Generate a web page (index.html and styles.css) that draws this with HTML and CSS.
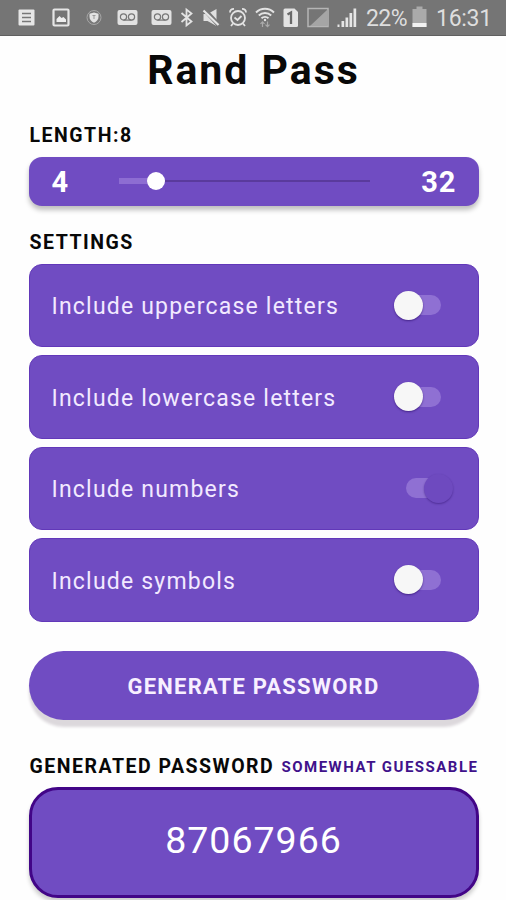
FILE: index.html
```html
<!DOCTYPE html>
<html lang="en">
<head>
<meta charset="utf-8">
<title>Rand Pass</title>
<link rel="stylesheet" href="styles.css">
</head>
<body>
<header class="status">
  <div class="notifications">
    <svg width="17" height="36" viewBox="0 0 17 36"><rect x=".5" y="9.500" width="16" height="16" rx="1" fill="#e6e6e6"/><path d="M4 13.500h9M4 17.500h9M4 21.500h9" stroke="#777" stroke-width="1.500"/></svg>
    <svg width="18" height="36" viewBox="0 0 18 36"><rect x="1.500" y="9.500" width="15" height="16" rx="1" fill="none" stroke="#e6e6e6" stroke-width="2.200"/><path d="M4.500 22v-3l3-3 2 2 2-1 2.500 2.500V22z" fill="#eee"/></svg>
    <svg width="16" height="36" viewBox="0 0 16 36"><circle cx="8" cy="17.500" r="7" fill="#777" stroke="#a7a7a7"/><path d="M8 12.500l4.500 1.300v3c0 2.700-1.800 4.700-4.500 6-2.700-1.300-4.500-3.300-4.500-6v-3z" fill="#e2e2e2"/><path d="M8 15v4M6.500 15.500h3" stroke="#999"/></svg>
    <svg width="21" height="36" viewBox="0 0 21 36"><rect x=".5" y="10" width="20" height="15" rx="2" fill="#e2e2e2"/><g fill="none" stroke="#777" stroke-width="1.200"><circle cx="6.500" cy="17" r="3.100"/><circle cx="14.500" cy="17" r="3.100"/><path d="M6.500 20.100h8"/></g></svg>
    <svg width="21" height="36" viewBox="0 0 21 36"><rect x=".5" y="10" width="20" height="15" rx="2" fill="#e2e2e2"/><g fill="none" stroke="#777" stroke-width="1.200"><circle cx="6.500" cy="17" r="3.100"/><circle cx="14.500" cy="17" r="3.100"/><path d="M6.500 20.100h8"/></g></svg>
  </div>
  <div class="system">
    <svg width="14" height="36" viewBox="0 0 14 36"><path d="M1.500 13l10 8.500-5 4V9.500l5 4-10 8.500" fill="none" stroke="#e3e3e3" stroke-width="1.800"/></svg>
    <svg width="19" height="36" viewBox="0 0 19 36"><path d="M1.500 14h4l9-5v17l-9-5h-4z" fill="#e0e0e0"/><path d="M2 9l15.500 17" stroke="#777" stroke-width="4.500"/><path d="M1.500 10.500L16.500 25" stroke="#e6e6e6" stroke-width="2.200"/></svg>
    <svg width="18" height="36" viewBox="0 0 18 36"><g fill="none" stroke="#e3e3e3" stroke-width="1.800"><circle cx="9" cy="18" r="7"/><path d="M1 12.500c0-2.300 1.600-3.700 4-3.700M17 12.500c0-2.300-1.600-3.700-4-3.700M4 23.500l-2 2.500M14 23.500l2 2.500M5.500 17.500l3 2.500 4-4"/></g></svg>
    <svg width="20" height="36" viewBox="0 0 20 36"><g fill="none" stroke="#e3e3e3" stroke-width="1.900"><path d="M1 12.500c5-5 13-5 18 0M3.800 15.500c3.500-3.400 8.900-3.400 12.400 0M6.500 18.300c2-1.900 5-1.900 7 0"/></g><circle cx="10" cy="20" r="1.200" fill="#e3e3e3"/><path d="M7.500 27v-5M5.500 23.800l2-2 2 2M12.500 21.500v5M10.500 24.700l2 2 2-2" fill="none" stroke="#aaa" stroke-width="1.200"/></svg>
    <svg width="16" height="36" viewBox="0 0 16 36"><path d="M2 8.500h9.500L15 12v13.500q0 1.500-1.500 1.500H2Q.5 27 .5 25.500V10Q.5 8.500 2 8.500z" fill="#e3e3e3"/><path d="M4.500 14.500L8 12.500V24" fill="none" stroke="#696969" stroke-width="2.300"/></svg>
    <svg width="22" height="36" viewBox="0 0 22 36"><rect x="1" y="8.500" width="20" height="18" fill="none" stroke="#b5b5b5" stroke-width="1.500"/><path d="M3 26L20 10v16z" fill="#a5a5a5"/></svg>
    <svg width="20" height="36" viewBox="0 0 20 36"><path d="M.5 24.500h2V27h-2zM4.500 21h2.700v6H4.500zM8.500 17.500h2.700V27H8.500zM12.500 13h2.700v14h-2.700zM16.500 8.500h2.700V27h-2.700z" fill="#e6e6e6"/></svg>
    <span class="percent">22%</span>
    <svg width="15" height="36" viewBox="0 0 15 36"><path d="M.5 9h4V6.500h6V9h4v18H.5z" fill="#aaa"/><path d="M.5 23h14v4H.5z" fill="#f2f2f2"/></svg>
    <span class="clock">16:31</span>
  </div>
</header>
<main class="app">
  <h1 class="title">Rand Pass</h1>
  <h2 class="label">LENGTH:8</h2>
  <section class="length">
    <span class="bound">4</span>
    <div class="slider"><span class="filled"></span><span class="handle"></span><span class="rest"></span></div>
    <span class="bound">32</span>
  </section>
  <h2 class="label settings-label">SETTINGS</h2>
  <section class="settings">
    <div class="option"><span>Include uppercase letters</span><span class="switch"></span></div>
    <div class="option"><span>Include lowercase letters</span><span class="switch"></span></div>
    <div class="option"><span>Include numbers</span><span class="switch on"></span></div>
    <div class="option"><span>Include symbols</span><span class="switch"></span></div>
  </section>
  <button class="generate">GENERATE PASSWORD</button>
  <div class="result-head">
    <h2 class="label result-label">GENERATED PASSWORD</h2>
    <span class="strength">SOMEWHAT GUESSABLE</span>
  </div>
  <output class="password">87067966</output>
</main>
</body>
</html>
```
FILE: styles.css
```css
* { box-sizing: border-box; }
html { overflow: hidden; }
body {
  margin: 0;
  height: 900px;
  overflow: hidden;
  background: #fefefe;
  color: #080808;
  font-family: Roboto, "Liberation Sans", sans-serif;
}
.status {
  display: flex;
  justify-content: space-between;
  height: 36px;
  padding: 0 16px 0 18px;
  background: #757575;
  border-bottom: 1px solid #606060;
  color: #dedede;
}
.status svg { display: block; flex: none; }
.notifications { display: flex; gap: 13px; }
.notifications svg:nth-child(2) { margin-left: 4px; }
.notifications svg:nth-child(3) { margin-left: 3px; }
.notifications svg:nth-child(4) { margin-left: 2px; }
.system { display: flex; gap: 8px; }
.percent, .clock {
  height: 36px;
  font-size: 23px;
  line-height: 37px;
  white-space: nowrap;
}
.percent { width: 42px; margin-left: 1px; letter-spacing: -0.6px; }
.system .percent + svg { margin-left: -4px; }
.clock { width: 54px; margin-left: 1px; letter-spacing: -0.3px; }
.app {
  display: flex;
  flex-direction: column;
  padding: 0 27.5px 0 28.500px;
}
.title {
  height: 68px;
  margin: 0;
  font-size: 41px;
  font-weight: 700;
  line-height: 68px;
  letter-spacing: 2px;
  text-align: center;
}
.label {
  height: 24px;
  margin: 20px 0 0 1px;
  font-size: 19.5px;
  font-weight: 700;
  line-height: 24px;
  letter-spacing: 1.5px;
  white-space: nowrap;
}
.length {
  display: grid;
  grid-template-columns: 67px 251px 1fr;
  align-items: center;
  height: 49px;
  margin-top: 8.500px;
  padding: 0 22px 0 23px;
  border-radius: 13px;
  background: #704cc2;
  box-shadow: 0 4px 5px rgba(0, 0, 0, .25);
  color: #fff;
}
.bound {
  font-size: 29px;
  font-weight: 700;
  letter-spacing: 1px;
  padding-top: 2px;
}
.bound:last-child { text-align: right; }
.slider { display: flex; align-items: center; }
.filled { width: 28px; height: 6px; background: #8d6dd2; }
.handle { width: 18px; height: 18px; border-radius: 50%; background: #fff; }
.rest { flex: 1; height: 2px; background: #5a3a9c; }
.settings-label { margin-top: 25px; }
.settings {
  display: flex;
  flex-direction: column;
  gap: 8.200px;
  margin-top: 9.500px;
}
.option {
  display: flex;
  align-items: center;
  justify-content: space-between;
  height: 83.300px;
  padding: 2px 37px 0 22px;
  border: 1px solid #6238b9;
  border-radius: 13px;
  background: #704cc2;
  color: #f2e9ff;
  font-size: 23px;
  letter-spacing: 1.2px;
}
.switch {
  position: relative;
  width: 35px;
  height: 20px;
  margin-top: -3px;
  border-radius: 10px;
  background: #8f70d3;
}
.switch::after {
  content: "";
  position: absolute;
  top: -4.500px;
  left: -12px;
  width: 29px;
  height: 29px;
  border-radius: 50%;
  background: #f7f7f7;
  box-shadow: 0 1px 2px rgba(40, 10, 100, .6);
}
.switch.on::after {
  left: 18px;
  background: #6e4abf;
  box-shadow: 0 1px 2px rgba(40, 10, 100, .45);
}
.generate {
  height: 69px;
  margin: 29px 0 0;
  padding: 3px 0 0;
  border: 0;
  border-radius: 35px;
  background: #704cc2;
  box-shadow: 0 7px 3px #dcd8dc;
  color: #f8f0ff;
  font-family: inherit;
  font-size: 22px;
  font-weight: 700;
  letter-spacing: 1.2px;
}
.result-head {
  display: flex;
  justify-content: space-between;
  align-items: center;
  height: 24px;
  margin-top: 35px;
}
.result-label { margin-top: 0; }
.strength {
  color: #40128b;
  font-size: 15px;
  font-weight: 700;
  letter-spacing: 1.5px;
  white-space: nowrap;
}
.password {
  display: flex;
  align-items: center;
  justify-content: center;
  height: 111px;
  margin-top: 8.500px;
  padding-bottom: 6px;
  border: 3px solid #420587;
  border-radius: 29px;
  background: #704cc2;
  box-shadow: 0 4px 4px rgba(0, 0, 0, .2);
  color: #fff;
  font-size: 37.500px;
  letter-spacing: 1px;
}
```
